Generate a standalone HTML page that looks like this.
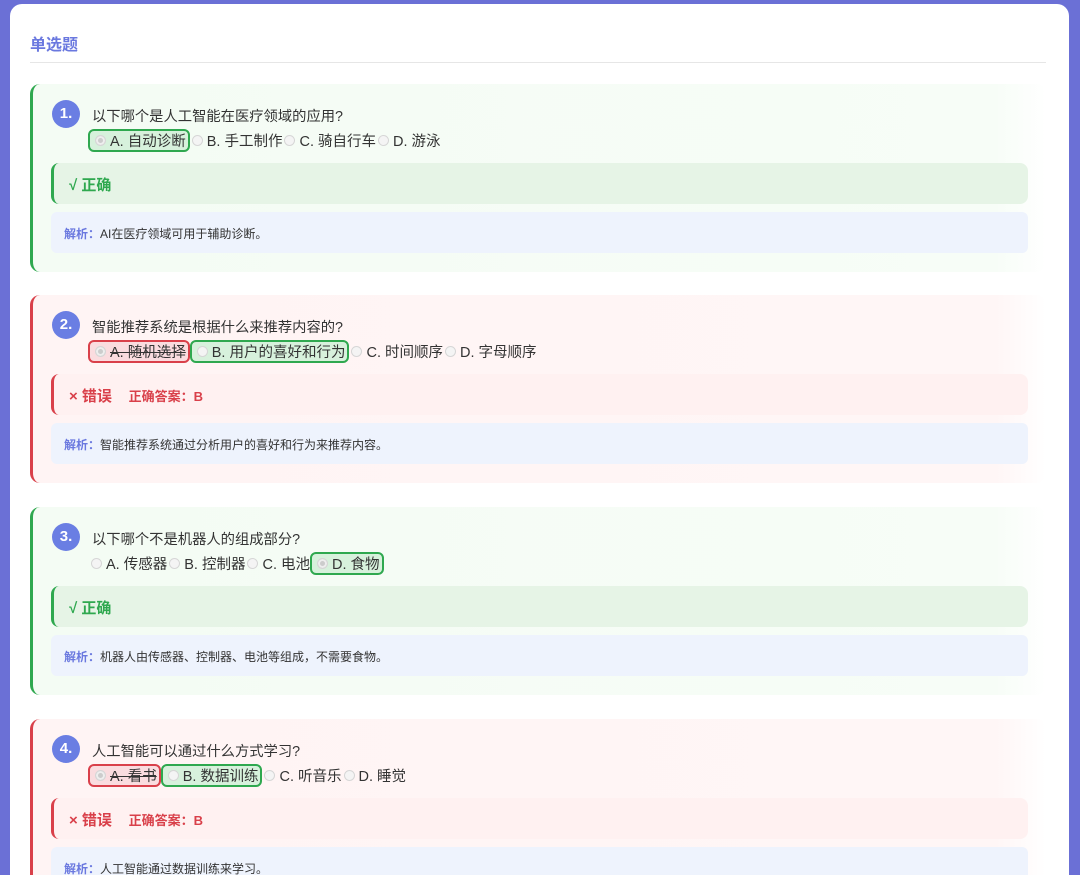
<!DOCTYPE html>
<html><head><meta charset="utf-8"><style>
*{box-sizing:border-box;margin:0;padding:0}
html,body{width:1080px;height:875px;overflow:hidden}
body{background:#6b70d6;font-family:"Liberation Sans","Noto Sans CJK SC",sans-serif;color:#333;position:relative}
.panel{position:absolute;left:10px;top:4px;width:1059px;height:871px;background:#fff;border-radius:12px 12px 0 0;overflow:hidden}
.title{position:absolute;left:20px;top:27px;font-size:16px;font-weight:bold;color:#6a78df}
.hr{position:absolute;left:20px;top:58px;width:1016px;height:1px;background:#e6e6e6}
.card{position:absolute;left:20px;width:1016px;height:188px;border-radius:10px;border-left:3px solid #2fa84f;background:linear-gradient(90deg,#f4fcf4,#f7fdf7 95%,#fff)}
.card.bad{border-left-color:#d9404a;background:linear-gradient(90deg,#fff4f4,#fff6f6 95%,#fff)}
.num{position:absolute;left:19px;top:16px;width:28px;height:28px;border-radius:50%;background:#6a7ee3;color:#fff;font-weight:bold;font-size:15px;text-align:center;line-height:28px}
.q{position:absolute;left:59px;top:21px;font-size:14.3px;color:#333}
.opts{position:absolute;left:55px;top:44px;height:24px;display:flex;align-items:center;font-size:14.5px;color:#333;white-space:nowrap}
.o{display:inline-flex;align-items:center;height:23px;padding:0 2px 0 3px;border:2px solid transparent;border-radius:6px}
.o.ok{border-color:#2fa84f;background:#d7f1dc}
.o.no{border-color:#d9404a;background:#fadcdf}
.o.no span{text-decoration:line-through}
.r{width:11px;height:11px;border-radius:50%;border:1px solid #d6d6d6;background:#f4f4f4;margin:0 4px 0 2px;display:inline-block}
.r.f{background:#ccc;box-shadow:inset 0 0 0 2px #eee}
.fb{position:absolute;left:18px;top:79px;width:977px;height:41px;border-radius:8px;border-left:3px solid #2fa84f;background:#e6f4e6;font-size:15px;font-weight:bold;color:#2fa84f;padding:11px 0 0 15px}
.bad .fb{border-left-color:#d9404a;background:#fff1f1;color:#d9404a}
.an{position:absolute;left:18px;top:128px;width:977px;height:41px;border-radius:6px;background:#eef3fd;font-size:12px;color:#333;padding:13px 0 0 13px}
.an b{color:#6a78df}
</style></head><body>
<div class="panel">
<div class="title">单选题</div>
<div class="hr"></div>

<div class="card" style="top:80px">
<div class="num">1.</div>
<div class="q">以下哪个是人工智能在医疗领域的应用?</div>
<div class="opts"><span class="o ok"><i class="r f"></i><span>A. 自动诊断</span></span><i class="r"></i>B. 手工制作 <i class="r"></i>C. 骑自行车 <i class="r"></i>D. 游泳</div>
<div class="fb">√ 正确</div>
<div class="an"><b>解析：</b>AI在医疗领域可用于辅助诊断。</div>
</div>

<div class="card bad" style="top:291px">
<div class="num">2.</div>
<div class="q">智能推荐系统是根据什么来推荐内容的?</div>
<div class="opts"><span class="o no"><i class="r f"></i><span>A. 随机选择</span></span><span class="o ok"><i class="r"></i>B. 用户的喜好和行为</span><i class="r"></i>C. 时间顺序 <i class="r"></i>D. 字母顺序</div>
<div class="fb">× 错误&nbsp;&nbsp;&nbsp;&nbsp;<span style="font-size:13px">正确答案：B</span></div>
<div class="an"><b>解析：</b>智能推荐系统通过分析用户的喜好和行为来推荐内容。</div>
</div>

<div class="card" style="top:503px">
<div class="num">3.</div>
<div class="q">以下哪个不是机器人的组成部分?</div>
<div class="opts"><i class="r" style="margin-left:3px"></i>A. 传感器 <i class="r"></i>B. 控制器 <i class="r"></i>C. 电池 <span class="o ok"><i class="r f"></i><span>D. 食物</span></span></div>
<div class="fb">√ 正确</div>
<div class="an"><b>解析：</b>机器人由传感器、控制器、电池等组成，不需要食物。</div>
</div>

<div class="card bad" style="top:715px">
<div class="num">4.</div>
<div class="q">人工智能可以通过什么方式学习?</div>
<div class="opts"><span class="o no"><i class="r f"></i><span>A. 看书</span></span><span class="o ok"><i class="r"></i>B. 数据训练</span><i class="r"></i>C. 听音乐 <i class="r"></i>D. 睡觉</div>
<div class="fb">× 错误&nbsp;&nbsp;&nbsp;&nbsp;<span style="font-size:13px">正确答案：B</span></div>
<div class="an"><b>解析：</b>人工智能通过数据训练来学习。</div>
</div>
</div>
</body></html>
